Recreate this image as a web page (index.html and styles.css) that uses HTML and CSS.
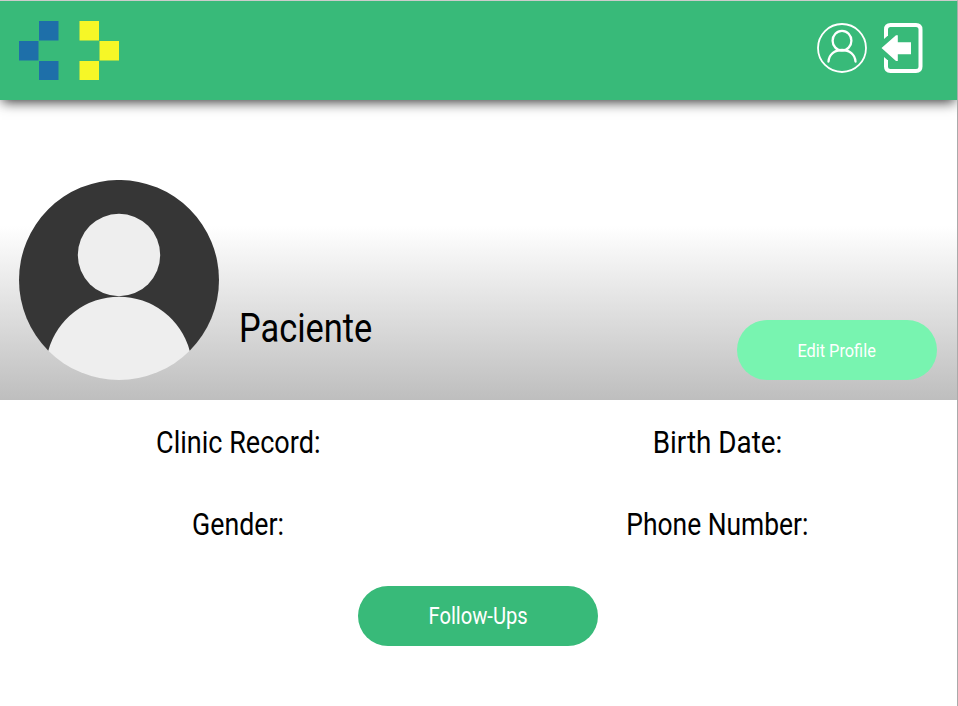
FILE: index.html
```html
<!DOCTYPE html>
<html lang="en">
<head>
<meta charset="utf-8">
<title>Paciente</title>
<link rel="stylesheet" href="styles.css">
</head>
<body>
<header class="topbar">
  <svg class="logo" width="100" height="60" viewBox="0 0 100 60">
    <path fill="#1e6fa9" d="M20 0h19.500v19.500H20zM0 20h19.500v19.500H0zM20 40h19.500v19H20z"/>
    <path fill="#f6f727" d="M60.500 0h19.500v19.500H60.500zM80.500 20H100v19.500H80.500zM60.500 40h19.500v19H60.500z"/>
  </svg>
  <nav class="actions">
    <svg width="50" height="50" viewBox="0 0 50 50" fill="none" stroke="#fff">
      <circle cx="25" cy="25" r="24" stroke-width="1.800"/>
      <ellipse cx="25" cy="17.700" rx="9.400" ry="9.800" stroke-width="2.300"/>
      <path stroke-width="2.300" stroke-linecap="round" d="M11.500 38.500C12 31.500 17.500 27 25 27s13 4.500 13.500 11.500"/>
    </svg>
    <svg width="42" height="50" viewBox="0 0 42 50">
      <path fill="none" stroke="#fff" stroke-width="4" d="M5 13V6.500Q5 2 9.500 2H35Q39.500 2 39.500 6.500V43.500Q39.500 48 35 48H9.500Q5 48 5 43.500V37"/>
      <path fill="#fff" d="M3 12.500V16l4-3.500zM3 37.500V34l4 3.500zM.5 25L15 12.300H16.800V19.300H30V31.300H16.800V38H15z"/>
    </svg>
  </nav>
</header>
<main>
  <section class="hero">
    <svg class="avatar" width="200" height="200" viewBox="0 0 200 200">
      <path fill="#363636" d="M29.300 170.700A100 100 0 1 1 170.700 170.700z"/>
      <circle fill="#eee" cx="100" cy="75" r="41.200"/>
      <path fill="#eee" d="M29.300 170.700A73.300 73.300 0 0 1 170.700 170.700A100 100 0 0 1 29.300 170.700z"/>
    </svg>
    <h1 class="name"><span class="narrow">Paciente</span></h1>
    <button class="edit"><span class="narrow">Edit Profile</span></button>
  </section>
  <section class="details">
    <p><span class="narrow record">Clinic Record:</span></p>
    <p><span class="narrow birth">Birth Date:</span></p>
    <p><span class="narrow gender">Gender:</span></p>
    <p><span class="narrow phone">Phone Number:</span></p>
  </section>
  <div class="footer"><button class="follow"><span class="narrow">Follow-Ups</span></button></div>
</main>
</body>
</html>
```
FILE: styles.css
```css
* { box-sizing: border-box; }
body {
  margin: 0;
  height: 706px;
  overflow: hidden;
  border-top: 1px solid #ccc;
  border-right: 1px solid #aaa;
  background: #fff;
  color: #000;
  font-family: Roboto, "Liberation Sans", sans-serif;
}
.topbar {
  position: relative;
  display: flex;
  justify-content: space-between;
  height: 99px;
  padding: 20px 34px 0 19px;
  background: #38ba79;
  box-shadow: 0 4px 12px -2px rgba(0, 0, 0, .8);
}
.actions { display: flex; gap: 14px; padding-top: 2px; }
.hero {
  display: flex;
  align-items: flex-end;
  height: 300px;
  padding: 0 20px 20px 19px;
  background: linear-gradient(#fff 42%, #bebebe);
}
.narrow { display: inline-block; transform: scaleX(.86); white-space: nowrap; }
.name { flex: 1; margin: 0 0 27px 20px; font-size: 40px; font-weight: 400; line-height: 48px; }
.name .narrow { transform-origin: left; }
.narrow.record { transform: scaleX(.845); }
.narrow.birth { transform: scaleX(.87); }
.narrow.gender { transform: scaleX(.835); }
.narrow.phone { transform: scaleX(.825); }
button {
  border: 0;
  border-radius: 30px;
  height: 60px;
  padding: 0;
  color: #fff;
  font-family: inherit;
  font-weight: 400;
}
.edit { width: 200px; background: #78f4b0; font-size: 19px; }
.edit .narrow { transform: scaleX(.86); }
.follow { width: 240px; background: #38ba79; font-size: 24px; }
.follow .narrow { transform: scaleX(.84); }
.details {
  display: grid;
  grid-template-columns: 477px 1fr;
  row-gap: 42px;
  padding-top: 22px;
  text-align: center;
  font-size: 32px;
  line-height: 40px;
}
.details p { margin: 0; }
.footer { display: flex; justify-content: center; padding: 42px 1px 0 0; }
```
